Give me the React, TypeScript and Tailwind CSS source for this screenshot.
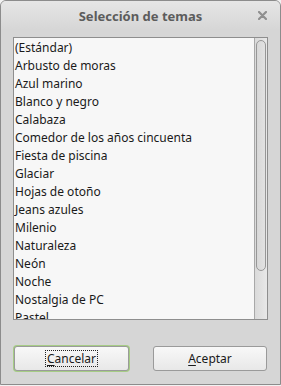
import React from "react";

const items = [
  "(Estándar)",
  "Arbusto de moras",
  "Azul marino",
  "Blanco y negro",
  "Calabaza",
  "Comedor de los años cincuenta",
  "Fiesta de piscina",
  "Glaciar",
  "Hojas de otoño",
  "Jeans azules",
  "Milenio",
  "Naturaleza",
  "Neón",
  "Noche",
  "Nostalgia de PC",
  "Pastel",
  "Primavera",
  "Tropical",
];

export default function App() {
  return (
    <div className="w-[281px] h-[386px] bg-[#f2f2f2]" style={{ fontFamily: '"Noto Sans", sans-serif' }}>
      <div className="w-[281px] h-[385px] border border-[#8c8c8c] rounded-t-[6px] bg-[#d6d6d6] flex flex-col overflow-hidden">
        <div className="h-[29px] shrink-0 relative flex items-center justify-center bg-gradient-to-b from-[#e6e6e6] to-[#d6d6d6]">
          <span className="text-[13px] font-bold text-[#5c5c5c] leading-none mt-[1px]">Selección de temas</span>
          <svg className="absolute right-[13px] top-[10px]" width="9" height="9" viewBox="0 0 9 9">
            <path d="M1 1 L8 8 M8 1 L1 8" stroke="#8f8f8f" strokeWidth="2.2" strokeLinecap="round" />
          </svg>
        </div>
        <div className="px-[12px] pt-[7px]">
          <div className="h-[283px] border border-[#8e8e8e] bg-[#f7f7f7] flex overflow-hidden">
            <div className="flex-1 pl-[1px] pt-[1px] overflow-hidden">
              {items.map((t) => (
                <div key={t} className="h-[18px] leading-[18px] text-[12px] text-[#1a1a1a] whitespace-nowrap">
                  {t}
                </div>
              ))}
            </div>
            <div className="w-[13px] border-l border-[#a8a8a8] bg-gradient-to-r from-[#dadada] to-[#e8e8e8] pt-[2px] pl-[1px]">
              <div className="w-[10px] h-[231px] rounded-[5px] border border-[#979797] bg-gradient-to-r from-[#d8d8d8] to-[#e2e2e2]" />
            </div>
          </div>
        </div>
        <div className="flex justify-between px-[12px] pt-[25px]">
          <div className="w-[117px] h-[27px] rounded-[4px] bg-[#a6cc85] p-[1px]">
            <div className="w-full h-full rounded-[3px] border border-[#9a9a9a] bg-gradient-to-b from-[#f8f8f8] to-[#e8e8e8] flex items-center justify-center">
              <span className="text-[12px] text-[#1a1a1a] leading-[15px] px-[1px] border border-dotted border-[#222]">
                <span className="underline underline-offset-2">C</span>ancelar
              </span>
            </div>
          </div>
          <div className="w-[114px] h-[25px] mt-[1px] mr-[1px] rounded-[3px] border border-[#9a9a9a] bg-gradient-to-b from-[#f8f8f8] to-[#e8e8e8] flex items-center justify-center">
            <span className="text-[12px] text-[#1a1a1a] leading-[15px]">
              <span className="underline underline-offset-2">A</span>ceptar
            </span>
          </div>
        </div>
      </div>
    </div>
  );
}
